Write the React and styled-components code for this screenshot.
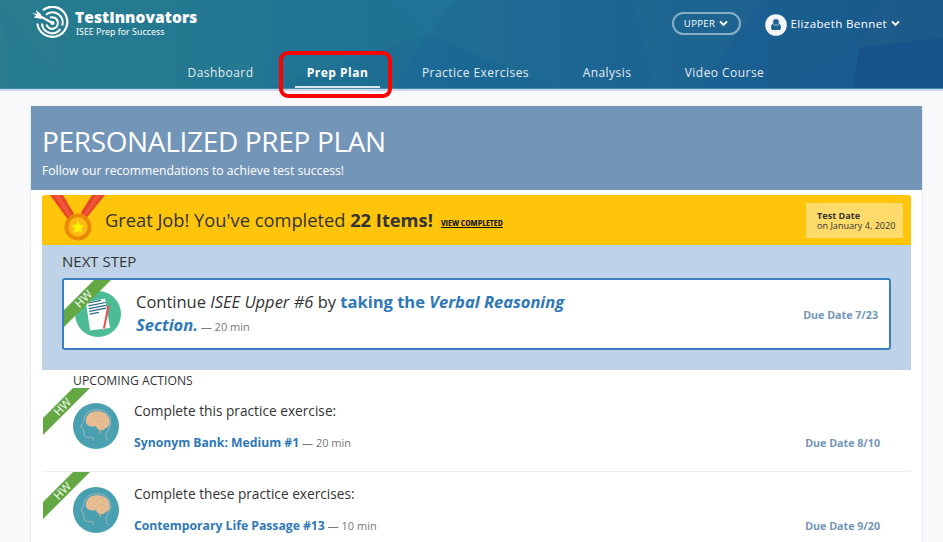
import React from "react"
import styled, { createGlobalStyle } from "styled-components"

const App = () => {
  return (
    <>
      <GlobalStyle />
      <StHeader>
        <HeaderArt />
        <StTopRow>
          <StBrand>
            <TargetLogo />
            <div>
              <StBrandName>TestInnovators</StBrandName>
              <StBrandSub>ISEE Prep for Success</StBrandSub>
            </div>
          </StBrand>
          <StAccount>
            <StLevel>
              UPPER <Chevron />
            </StLevel>
            <StUser>
              <UserIcon />
              <span>Elizabeth Bennet</span>
              <Chevron />
            </StUser>
          </StAccount>
        </StTopRow>
        <StNav>
          <StNavItem $w={66}>Dashboard</StNavItem>
          <StNavItem $w={62} $active>
            Prep Plan
            <StHighlight />
          </StNavItem>
          <StNavItem $w={108}>Practice Exercises</StNavItem>
          <StNavItem $w={49}>Analysis</StNavItem>
          <StNavItem $w={80}>Video Course</StNavItem>
        </StNav>
      </StHeader>

      <StPage>
        <StTitleBox>
          <h1>PERSONALIZED PREP PLAN</h1>
          <p>Follow our recommendations to achieve test success!</p>
        </StTitleBox>
        <StContent>
          <StBanner>
            <Medal />
            <StCongrats>
              Great Job! You've completed <b>22 Items!</b>
            </StCongrats>
            <StViewLink>VIEW COMPLETED</StViewLink>
            <StTestDate>
              <b>Test Date</b>
              <span>on January 4, 2020</span>
            </StTestDate>
          </StBanner>

          <StNextStep>
            <h2>NEXT STEP</h2>
            <StNextCard>
              <Ribbon />
              <PaperIcon />
              <StNextText>
                Continue <i>ISEE Upper #6</i> by{" "}
                <b>
                  taking the <i>Verbal Reasoning</i>
                </b>
                <br />
                <b>
                  <i>Section.</i>
                </b>
                <StTime> — 20 min</StTime>
              </StNextText>
              <StDue>Due Date 7/23</StDue>
            </StNextCard>
          </StNextStep>

          <StUpcomingTitle>UPCOMING ACTIONS</StUpcomingTitle>
          {actions.map((item) => (
            <StAction key={item.name}>
              <Ribbon />
              <BrainIcon />
              <StActionText>
                <p>{item.label}</p>
                <div>
                  <b>{item.name}</b>
                  <StTime> — {item.time}</StTime>
                </div>
              </StActionText>
              <StActionDue>Due Date {item.due}</StActionDue>
            </StAction>
          ))}
        </StContent>
      </StPage>
    </>
  )
}

export default App

const actions = [
  {
    label: "Complete this practice exercise:",
    name: "Synonym Bank: Medium #1",
    time: "20 min",
    due: "8/10",
  },
  {
    label: "Complete these practice exercises:",
    name: "Contemporary Life Passage #13",
    time: "10 min",
    due: "9/20",
  },
]

const HeaderArt = () => (
  <StArt viewBox="0 0 943 88" preserveAspectRatio="none">
    <defs>
      <linearGradient id="sky" x1="0" x2="1" y1="0" y2="0">
        <stop offset="0" stopColor="#277b8e" />
        <stop offset="0.28" stopColor="#237792" />
        <stop offset="0.5" stopColor="#1f6c94" />
        <stop offset="0.75" stopColor="#1b6192" />
        <stop offset="1" stopColor="#1a588c" />
      </linearGradient>
    </defs>
    <rect width="943" height="88" fill="url(#sky)" />
    <path d="M0 0H98L82 88H65L10 18Z" fill="#2a7f90" opacity=".3" />
    <path d="M0 0L12 88H0Z" fill="#2e828e" opacity=".4" />
    <path d="M275 0H457L428 34L262 88Z" fill="#1f7595" opacity=".35" />
    <path d="M428 34L262 88H394Z" fill="#1b6b97" opacity=".4" />
    <path d="M428 34L394 88H557Z" fill="#176496" opacity=".5" />
    <path d="M428 34L457 0H390Z" fill="#2376a0" opacity=".25" />
    <path d="M633 0L655 88H700L762 0Z" fill="#246a90" opacity=".35" />
    <path d="M762 0H842L860 46L768 88H700Z" fill="#1a6192" opacity=".3" />
    <path d="M882 0L859 47L943 37V0Z" fill="#205b88" opacity=".6" />
    <path d="M859 47L943 37V88H853Z" fill="#17518a" opacity=".85" />
    <path d="M859 47L768 88H853Z" fill="#195c8f" opacity=".7" />
    <path d="M0 87.5H943" stroke="#4688ac" strokeWidth="1" />
  </StArt>
)

const TargetLogo = () => (
  <svg width="38" height="34" viewBox="0 0 38 34" fill="none" stroke="#fff">
    <path d="M10.9 4.2A15 15 0 1 1 5.4 17.5" strokeWidth="2.2" />
    <path d="M14 8.7A10.2 10.2 0 0 1 30.3 19.5M28.3 23.2A10.2 10.2 0 0 1 10 17.5" strokeWidth="2.1" />
    <path d="M18 11.6A5.8 5.8 0 1 1 14.5 18.5" strokeWidth="2.1" />
    <path d="M5 8.5L20 16.8" strokeWidth="2.2" />
    <path d="M0 7L5 8L4 4L9 8.3L9.5 13L1.8 11.5L4 9.5Z" fill="#fff" stroke="none" />
    <circle cx="20.5" cy="17" r="2.1" fill="#fff" stroke="none" />
  </svg>
)

const Chevron = () => (
  <svg width="9" height="7" viewBox="0 0 9 7" fill="none" stroke="#fff" strokeWidth="2">
    <path d="M1 1.4L4.5 4.9L8 1.4" />
  </svg>
)

const UserIcon = () => (
  <svg width="22" height="22" viewBox="0 0 22 22">
    <circle cx="11" cy="11" r="10.8" fill="#f5f5f5" />
    <path d="M7.7 9.5C5.5 11 5.8 16 7.3 16H14.7C16.2 16 16.5 11 14.3 9.5Z" fill="#1b6192" />
    <circle cx="11" cy="8.1" r="3.3" fill="#1b6192" stroke="#f5f5f5" strokeWidth=".6" />
  </svg>
)

const Medal = () => (
  <StMedal width="56" height="50" viewBox="0 0 56 50">
    <path d="M0 0H13L27 24L19 26Z" fill="#e9452b" />
    <path d="M4 0H9L24 24L21 25Z" fill="#f0583c" />
    <path d="M55 0H42L27 24L35 25Z" fill="#e9452b" />
    <path d="M51 0H46L31 24L33 25Z" fill="#f0583c" />
    <path d="M20.5 22L27.5 14.5L34.5 22Z" fill="#ffc50b" />
    <circle cx="28" cy="32" r="13.5" fill="#e98a05" />
    <circle cx="28" cy="32" r="9.7" fill="#fdb813" />
    <path
      d="M28 25.5L30 29.7L34.6 30.3L31.2 33.5L32.1 38.1L28 35.9L23.9 38.1L24.8 33.5L21.4 30.3L26 29.7Z"
      fill="#fff200"
    />
  </StMedal>
)

const Ribbon = () => (
  <StRibbon>
    <svg width="47" height="47" viewBox="0 0 47 47">
      <path d="M30 0H47L0 47V30Z" fill="#64a844" />
    </svg>
    <span>HW</span>
  </StRibbon>
)

const PaperIcon = () => (
  <svg width="46" height="46" viewBox="0 0 46 46">
    <circle cx="23" cy="23" r="23" fill="#4cbc96" />
    <path d="M11 11.5L30 7.5L35 37L15 39.5Z" fill="#fff" />
    <g stroke="#28678a" strokeWidth="1.2">
      <path d="M13 12L26 9.3M13.4 14.8L30.5 11.5M13.8 17.6L30.8 14.3M14.2 20.4L31 17.2M14.7 23.2L24 21.4" />
    </g>
    <path d="M32.6 14L34.6 14.7L30 37.5L28.2 39L28 37Z" fill="#ea4f55" />
    <path d="M28.1 37.2L30 37.6L28 39.5Z" fill="#f4c89a" />
  </svg>
)

const BrainIcon = () => (
  <svg width="46" height="46" viewBox="0 0 46 46" fill="none">
    <circle cx="23" cy="23" r="23" fill="#49a0b1" />
    <path
      d="M20 37.5C20.3 35 19.6 34 17.5 34.2C13 34.6 11.5 34.5 11.2 32C11 30 11 28 10.5 26.5C9.8 25.2 8 24.8 8 23.8C8.5 21.5 10.8 20 11 17.5C11 10.5 17 6.8 23.5 6.8C33 6.8 38 12.5 37.5 20C37.3 25 33.5 28 33 31C32.8 33.5 33.5 35.5 34.8 37.5"
      stroke="#a5b7b9"
      strokeWidth="1"
    />
    <path
      d="M13 19C12 13 17 8.2 23.5 8.2C31 7.7 37 12.5 36.5 19C37 22.5 34.5 25 32 25.2C31 27.5 27.5 28 25.5 26C23.5 25.5 23.5 23.8 22.5 23C17.5 24.5 13.5 22.5 13 19Z"
      fill="#e9bd94"
    />
    <path d="M25.2 26L27 30.5L28.2 30L27.7 27" fill="#b9a78c" />
    <path
      d="M15 17C18 18 18 14 21 15S24 11 27 12M20 9.5L21 13M29 9.5C27 13 31 13 33 16M23 22C26 19 25 17 29 18S34 20 35 22M28 25L30 22M16 21L18 18"
      stroke="#d9ab86"
      strokeWidth=".5"
    />
  </svg>
)

const GlobalStyle = createGlobalStyle`
  body {
    margin: 0;
    background: #f9f9fb;
    color: #333;
    font-family: "Open Sans", "Noto Sans", sans-serif;
    height: 542px;
    overflow: hidden;
  }
  h1, h2, p {
    margin: 0;
    font-weight: 400;
  }
  svg {
    display: block;
    flex-shrink: 0;
  }
`

const StHeader = styled.header`
  position: relative;
  height: 89px;
  border-bottom: 2px solid #cbd9e6;
  color: #fff;
`

const StArt = styled.svg`
  position: absolute;
  inset: 0;
  width: 100%;
  height: 89px;
`

const StTopRow = styled.div`
  position: relative;
  display: flex;
  justify-content: space-between;
  box-sizing: border-box;
  height: 48px;
  padding: 6px 43px 0 32px;
`

const StBrand = styled.div`
  display: flex;
  gap: 5px;
`

const StBrandName = styled.div`
  margin-top: 2px;
  font-size: 15.5px;
  font-weight: 800;
  line-height: 19px;
  letter-spacing: 0.07px;
`

const StBrandSub = styled.div`
  margin-left: 1px;
  font-size: 8.9px;
  line-height: 9px;
  font-family: "Noto Sans", sans-serif;
`

const StAccount = styled.div`
  display: flex;
  align-items: flex-start;
  gap: 24px;
  padding-top: 6px;
`

const StLevel = styled.div`
  display: flex;
  align-items: center;
  justify-content: center;
  gap: 4px;
  box-sizing: border-box;
  width: 69px;
  height: 23px;
  border: 2px solid #86aec7;
  border-radius: 12px;
  font-size: 9.6px;
  letter-spacing: 0.3px;
`

const StUser = styled.div`
  display: flex;
  align-items: center;
  gap: 4px;
  height: 24px;
  font-size: 11.6px;
  letter-spacing: 0.35px;
  white-space: nowrap;

  > svg:first-child {
    margin-top: 2px;
  }
  span {
    margin-bottom: 2px;
  }
  > svg:last-child {
    margin-bottom: 1px;
  }
`

const StNav = styled.nav`
  position: relative;
  display: flex;
  gap: 30px;
  padding-left: 176px;
`

const StNavItem = styled.div`
  position: relative;
  display: flex;
  justify-content: center;
  box-sizing: border-box;
  width: ${(p) => p.$w + 23}px;
  height: 40px;
  padding-top: 16px;
  font-size: 12px;
  line-height: 18px;
  letter-spacing: ${(p) => (p.$active ? 0.5 : 0.45)}px;
  white-space: nowrap;
  font-weight: ${(p) => (p.$active ? 700 : 400)};
  color: ${(p) => (p.$active ? "#fff" : "#e3edf2")};
  border-bottom: 2px solid ${(p) => (p.$active ? "#d9e6ee" : "transparent")};
`

const StHighlight = styled.div`
  position: absolute;
  left: -16px;
  top: 3px;
  box-sizing: border-box;
  width: 113px;
  height: 47px;
  border: 4px solid #fe0000;
  border-radius: 9px;
  z-index: 2;
`

const StPage = styled.main`
  margin: 15px 20px 0 30px;
  height: 440px;
  background: #fff;
  border: 0 solid #ebebef;
  border-width: 0 1px;
`

const StTitleBox = styled.div`
  height: 84px;
  padding: 17px 11px 0;
  box-sizing: border-box;
  background: #7395b8;
  color: #fff;

  h1 {
    font-size: 28px;
    line-height: 36px;
    letter-spacing: -0.34px;
  }
  p {
    margin-top: 3px;
    font-size: 12.2px;
    line-height: 18px;
  }
`

const StContent = styled.div`
  padding: 5px 11px 0;
`

const StBanner = styled.div`
  display: flex;
  height: 50px;
  background: #ffc50b;
  border-radius: 3px 3px 0 0;
`

const StMedal = styled.svg`
  margin-left: 8px;
`

const StCongrats = styled.div`
  margin-left: -1px;
  font-size: 18.3px;
  line-height: 50px;
  white-space: nowrap;
`

const StViewLink = styled.a`
  margin: 21px 0 0 8px;
  width: 63px;
  color: #111;
  font-size: 9.2px;
  line-height: 14px;
  font-weight: 700;
  font-stretch: 75%;
  text-decoration: underline;
  white-space: nowrap;
`

const StTestDate = styled.div`
  display: flex;
  flex-direction: column;
  box-sizing: border-box;
  width: 97px;
  height: 35px;
  margin: 8px 8px 0 auto;
  padding: 8px 0 0 11px;
  background: #ffdb6c;
  font-size: 9.1px;
  line-height: 10px;
  white-space: nowrap;
`

const StNextStep = styled.section`
  height: 125px;
  padding: 6px 20px 0;
  box-sizing: border-box;
  background: #bed3e8;

  h2 {
    font-size: 15px;
    line-height: 20px;
  }
`

const StNextCard = styled.div`
  position: relative;
  display: flex;
  box-sizing: border-box;
  height: 72px;
  margin-top: 7px;
  padding: 11px 11px 0;
  border: 2px solid #3a7fbd;
  border-radius: 3px;
  background: #fff;
`

const StNextText = styled.div`
  flex: 1;
  margin: -1px 0 0 15px;
  font-size: 16.5px;
  line-height: 23px;
  white-space: nowrap;

  b {
    color: #2f78b7;
  }
`

const StTime = styled.span`
  color: #777;
  font-size: 11px;
`

const StDue = styled.div`
  margin-top: 14px;
  color: #7395b8;
  font-size: 10.7px;
  line-height: 20px;
  font-weight: 700;
  white-space: nowrap;
`

const StRibbon = styled.div`
  position: absolute;
  left: 0;
  top: 0;

  span {
    position: absolute;
    left: 8px;
    top: 11px;
    width: 22px;
    color: #fff;
    font-size: 11.5px;
    line-height: 15px;
    text-align: center;
    transform: rotate(-45deg);
  }
`

const StUpcomingTitle = styled.h2`
  padding: 3px 0 0 31px;
  font-size: 12.2px;
  line-height: 15px;
`

const StAction = styled.div`
  position: relative;
  display: flex;
  box-sizing: border-box;
  height: 83.5px;
  margin-left: 1px;
  padding: 15px 31px 0 30px;
  border-bottom: 1px solid #eee;
`

const StActionText = styled.div`
  flex: 1;
  margin-left: 15px;

  p {
    margin-top: -1.2px;
    font-size: 13.7px;
    line-height: 18px;
  }
  div {
    margin-top: 14px;
    line-height: 18px;
    font-size: 12.2px;
  }
  b {
    color: #2f78b7;
  }
`

const StActionDue = styled(StDue)`
  margin-top: 29.8px;
`
